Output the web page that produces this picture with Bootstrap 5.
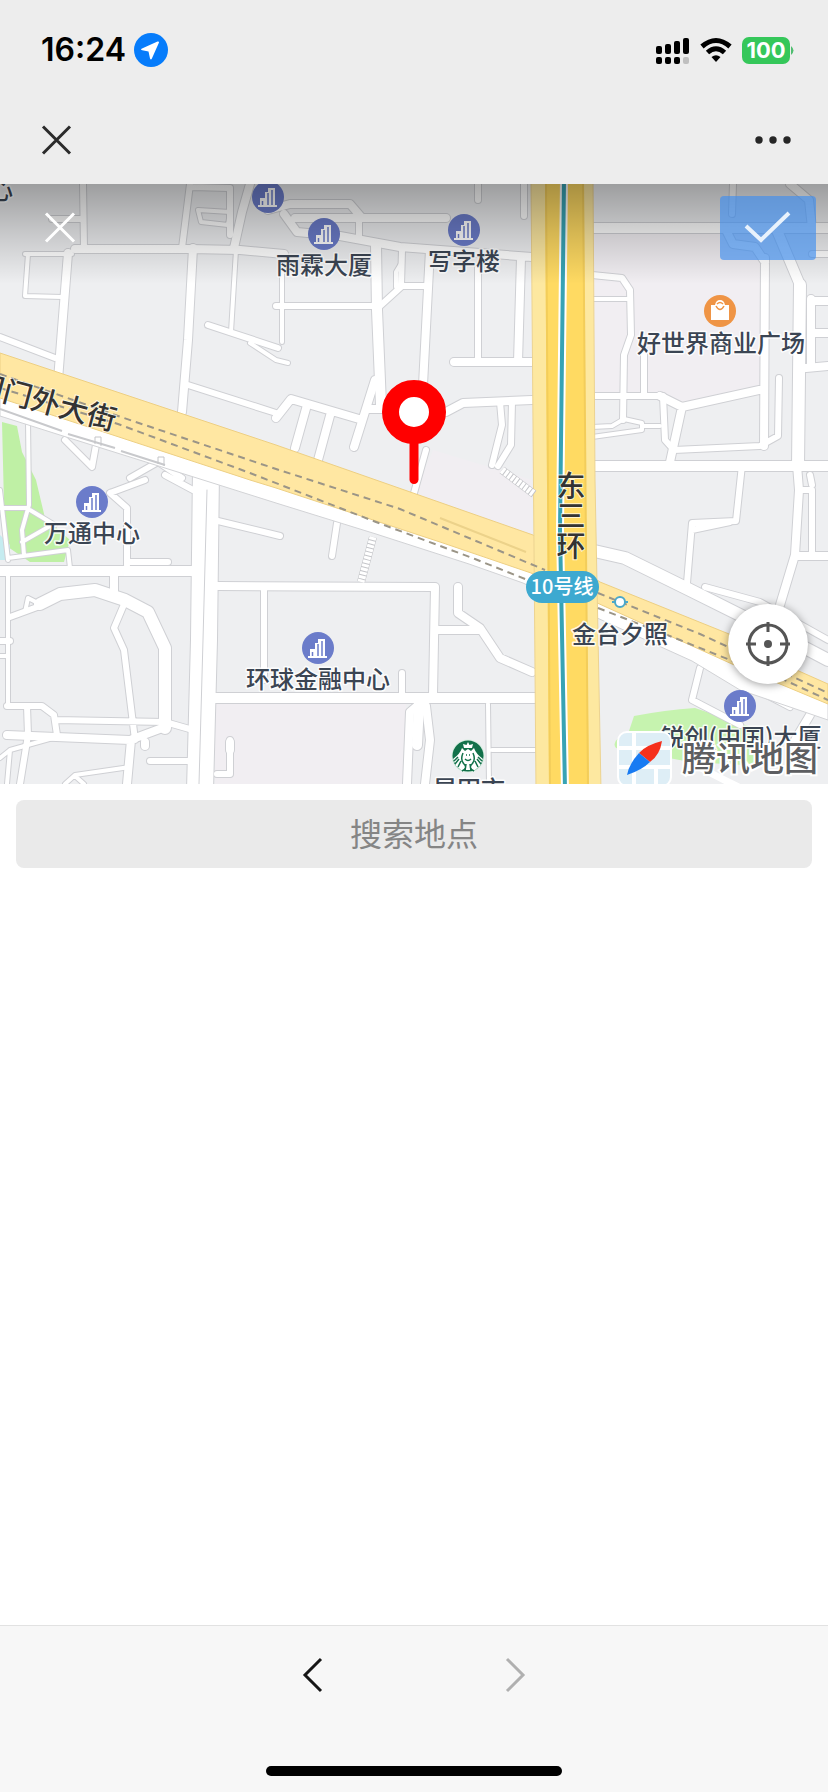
<!DOCTYPE html>
<html lang="zh-CN">
<head>
<meta charset="utf-8">
<meta name="viewport" content="width=device-width, initial-scale=1">
<title>选择地点</title>
<link href="https://cdn.jsdelivr.net/npm/bootstrap@5.3.0/dist/css/bootstrap.min.css" rel="stylesheet">
<style>
body{font-family:Inter,"Noto Sans CJK SC",sans-serif;background:#fff}
.chrome{background:#ededed}
.status-row{height:100px;padding:0 34px 0 41px}
.title-row{height:84px;padding:0 33px 4px 34px}
.clock{font-size:32px;line-height:40px;font-weight:600;color:#000}
.battery{width:48px;height:27px;border-radius:7px;background:#35c75a;color:#fff;font-size:22px;line-height:27px;font-weight:700}
.bare{background:none;border:0;padding:0;line-height:0}
.map-area{height:600px;background:#eeeff1}
.map-area>svg.tiles{width:100%;height:100%}
.map-shade{height:100px;background:linear-gradient(rgba(0,0,0,.34),rgba(0,0,0,.16) 50%,rgba(0,0,0,0));pointer-events:none}
.map-close{top:24px;left:40px}
.map-ok{top:12px;right:12px;width:96px;height:64px;border-radius:4px;background:rgba(62,141,240,.65)}
.map-locate{right:20px;bottom:100px;width:80px;height:80px;border-radius:50%;background:#fff;box-shadow:0 1px 8px rgba(0,0,0,.4)}
.map-pin{left:50%;bottom:50%;transform:translateX(-50%)}
.place-search{height:68px;border:0;border-radius:8px;background:#eaeaea;font-family:"Noto Sans CJK SC",sans-serif;font-size:32px;font-weight:400;color:#333;padding:4px 12px 8px}
.place-search::placeholder{color:#858585;opacity:1}
.place-search:focus{background:#eaeaea}
.tab-foot{background:#f7f7f7;border-top:1px solid #e2e2e2;padding:24px 0 16px}
.step-gap{gap:154px}
.home-bar{width:296px;height:10px;border-radius:5px;background:#000;margin-top:66px}
.poi{font:500 24px "Noto Sans CJK SC",sans-serif;fill:#3b4553;stroke:#fff;stroke-width:3px;stroke-opacity:.85;paint-order:stroke;text-anchor:middle;stroke-linejoin:round}
.street{font:500 29px "Noto Sans CJK SC",sans-serif;fill:#333;stroke:#fff;stroke-opacity:.7;stroke-width:2px;paint-order:stroke;text-anchor:middle}
.metro{font:500 20px "Noto Sans CJK SC",sans-serif;fill:#fff;text-anchor:middle}
.brand{font:500 34px "Noto Sans CJK SC",sans-serif;fill:#5d5e61;stroke:#fff;stroke-width:4px;paint-order:stroke;text-anchor:middle}
</style>
</head>
<body>
<div class="d-flex flex-column min-vh-100">
<header class="chrome">
  <div class="status-row d-flex align-items-center justify-content-between">
    <div class="d-flex align-items-center gap-2">
      <span class="clock">16:24</span>
      <svg width="34" height="34" viewBox="0 0 34 34" aria-hidden="true"><circle cx="17" cy="17" r="17" fill="#067cfb"/><path d="M23.500 8.500 8 15.500q-2 1.200.3 1.700l6.200 1.300 1.500 7q.9 1.800 1.900 0L25 9.500q.2-1.300-1.500-1z" fill="#fff"/></svg>
    </div>
    <div class="d-flex align-items-center">
      <svg width="34" height="27" viewBox="0 0 34 27" aria-hidden="true"><g fill="#000"><rect x="0" y="9" width="6" height="8" rx="2"/><rect x="9" y="7" width="6" height="10" rx="2"/><rect x="18" y="4" width="6" height="13" rx="2"/><rect x="27" y="1" width="6" height="16" rx="2"/><rect x="0" y="20" width="6" height="7" rx="2"/><rect x="9" y="20" width="6" height="7" rx="2"/><rect x="18" y="20" width="6" height="7" rx="2"/></g><rect x="27" y="20" width="6" height="7" rx="2" fill="#bfbfbf"/></svg>
      <svg class="mx-2" width="36" height="26" viewBox="0 0 36 26" aria-hidden="true"><g fill="none" stroke="#000" stroke-width="5"><path d="M4 9.500Q18-2.500 32 9.500"/><path d="M9.500 15.500Q18 8 26.500 15.500"/></g><path d="M13.500 20q4.500-3.500 9 0L18 25z"/></svg>
      <span class="battery text-center">100</span>
      <svg width="4" height="9" viewBox="0 0 4 9" aria-hidden="true"><path d="M1 0q5 4.500 0 9z" fill="#4fbd70"/></svg>
    </div>
  </div>
  <div class="title-row d-flex align-items-center justify-content-between">
    <button class="bare" type="button" aria-label="关闭页面"><svg width="44" height="44" viewBox="0 0 44 44"><path d="M9 8.500 36 35.500M36 8.500 9 35.500" stroke="#2b2b2b" stroke-width="3" stroke-linecap="butt"/></svg></button>
    <button class="bare" type="button" aria-label="更多"><svg width="44" height="44" viewBox="0 0 44 44"><g fill="#262626"><circle cx="8" cy="22" r="3.700"/><circle cx="22" cy="22" r="3.700"/><circle cx="36" cy="22" r="3.700"/></g></svg></button>
  </div>
</header>

<main class="flex-grow-1">
<section class="map-area position-relative overflow-hidden" aria-label="地图">
<svg class="tiles d-block" viewBox="0 184 828 600" preserveAspectRatio="xMidYMid slice">
<defs>
  <g id="r4"><path d="M25 254H72M28 254 25 296 62 297M236 250 231 332M250 343 276 360 288 363M198 210 230 212 228 225 201 222ZM282 252V342M592 299H631M592 427 612 426 624 419 642 423V430L592 437M642 426H660M8 571V705M28 420 29 505 22 530 24 555M0 508H28M0 490 8 560M30 510 55 525M22 542 50 526M8 558 68 550 70 568M488 704 489 784M492 750H535M0 758 10 750 60 736M10 750 7 784M65 784 75 775 130 767M75 776 84 784M25 612 28 598 40 604M0 656H8M396 287V272L402 262"/></g>
  <g id="r6"><path d="M83 184 84 248M52 219H80M190 184 182 248M192 187 230 188V235M208 325 278 348M188 385 276 413M276 306H375M359 218V240M402 250 401 285M427 286H402L380 306M478 268V362M478 184V200M524 184V216M500 402 502 425 492 465M512 402 511 445 498 466M426 450 414 493M592 275 622 278 630 290 631 335 624 355 623 420M592 396H660M644 350V394M663 396 665 440 674 450 760 446 778 436 779 378M733 184 732 214M812 254H828M705 587 760 602 828 640M700 668 692 700 740 725M715 668 790 707M800 490H812V555M10 617 40 606M0 641H10M125 602 114 628 124 650 135 740M7 706H42L54 715 57 735M55 720 165 722 193 730M150 761H190M27 706 28 735 20 784M110 493 145 480M110 493 127 508V565M127 562H168M165 475 193 490M65 440 92 467 96 445M130 478 158 462 182 478M218 521 280 536M264 590V680M337 523 332 556M402 673V695M217 774H230V740M742 465 736 521 692 523 687 583M692 530 730 522M812 485 810 475M0 337 55 358"/></g>
  <g id="r8"><path d="M75 249H190L240 250 284 254M68 253 58 380M193 248 188 340 182 412M250 184 242 212 234 248M268 210 290 204H350L362 218H446M284 214 297 232 340 236 400 247 532 257M295 218H360M430 250 423 385M521 258 518 362M454 362H532M276 418 291 399 359 419M307 405 295 448M331 412 318 460M375 380 354 447M366 409H382M446 412 463 403 532 400M660 396 682 407 764 389M682 407 670 462M765 258 764 446M727 232 733 244 755 247 765 262M790 184 809 200 812 228M811 299V366M811 301H828M811 333H828M806 368 828 366M797 465 799 490 795 555 780 605M795 556H828M7 735 130 740 165 727M131 740 127 784M145 742V746M114 571V592M218 586 435 587 433 695M458 587V613L480 628 500 658 532 672M437 630H480M407 784 410 712 417 706 426 706 430 740 425 784M230 742V750M795 740 810 715"/></g>
  <g id="r10"><path d="M376 245 377 310 381 405M592 228H828M592 466H828M0 571H193M215 698H537M419 704 417 745M776 228 800 285"/></g>
  <g id="r12"><path d="M590 550 625 558 690 590 740 615 790 640 828 660M40 604 60 594 95 590 125 600 148 612 165 648V728M800 285 798 466"/></g>
  <g id="bldg"><circle r="16" fill="#6b7cca"/><path d="M-10 10V8H-8V1H-3V-5H0V-9H7V8H9V10Z" fill="#fff"/><path d="M-5.500 4V8M0-4V8M4-7V8" stroke="#6b7cca" stroke-width="1.500" fill="none"/></g>
</defs>
<rect x="-100" y="100" width="1028" height="800" fill="#eeeff1"/>
<path d="M592 234H764V395L680 402 660 396H592ZM276 704H406V784H215V704ZM433 450 532 480V535L415 493Z" fill="#f1eef2"/>
<path d="M2 422 17 426 22 452 36 480 45 518 70 540 64 562H30L5 545Z" fill="#bff0a5"/>
<path d="M0 535 10 545V560H0Z" fill="#c5ecf0"/>
<path d="M634 716Q665 710 695 708L760 730 762 766 690 762 616 748Q610 740 628 734Z" fill="#c6f3af"/>
<g fill="none" stroke-linejoin="round" stroke-linecap="round">
  <g stroke="#cfd0d4"><use href="#r4" stroke-width="6"/><use href="#r6" stroke-width="8"/><use href="#r8" stroke-width="10"/><use href="#r10" stroke-width="12"/><use href="#r12" stroke-width="14"/>
  <path d="M206 470 204 640 200 790" stroke-width="28"/></g>
  <g stroke="#fff"><use href="#r4" stroke-width="4"/><use href="#r6" stroke-width="6"/><use href="#r8" stroke-width="8"/><use href="#r10" stroke-width="10"/><use href="#r12" stroke-width="12"/>
  <path d="M206 470 204 640 200 790" stroke-width="26"/></g>
  <path d="M207 490 203 640 199 784" stroke="#cfd0d4"/>
</g>
<!-- service road and avenue -->
<path d="M0 390 250 470 531 565 595 598 732 655 828 698V720L740 690 692 661 595 617 523 583 469 564 376 534 276 503 200 479 63 436 0 416Z" fill="#fff" stroke="#d2d3d6"/>
<path d="M0 409 62 431M68 434 115 448M121 451 165 465" stroke="#c8c9cc" stroke-width="2"/>
<path d="M95 444V437H101V446M158 464V457H164V466" stroke="#c4c5c8" fill="none"/>
<path d="M0 353 276 445 533 535 600 582 729 634 792 668 828 684V704L732 664 595 602 531 573 443 543 276 488 250 480 0 398Z" fill="#ffe7a2" stroke="#edcf83"/>
<path d="M440 518 526 552" stroke="#ecd28a" stroke-width="2"/>
<!-- ring road -->
<path d="M531 180H593L595 480 601 790H536Z" fill="#fde8a0" stroke="#ecd391"/>
<path d="M545 180H584L585 480 589 790H549Z" fill="#ffda62"/>
<path d="M546 180 550 790M583 180 588 790" stroke="#f3cd5a" stroke-width="2"/>
<path d="M564 180 560 530 565 790" fill="none" stroke="#fff" stroke-width="8"/>
<path d="M564 180 560 530 565 790" fill="none" stroke="#37a3b4" stroke-width="4"/>
<g fill="none" stroke="#9b9587" stroke-width="2" stroke-dasharray="7 5">
  <path d="M0 374 118 416 276 469 400 509 545 570M0 388 118 424 250 473 376 522 475 559 530 581M598 593 700 634 828 693M598 608 680 640 740 664M780 678 828 700"/>
</g>
<path d="M373 537 361 582M502 470 534 494" fill="none" stroke="#c4c5c9" stroke-width="8"/>
<path d="M373 537 361 582M502 470 534 494" fill="none" stroke="#fff" stroke-width="7" stroke-dasharray="3 1"/>
<path d="M612 602H628" stroke="#4aa8ca" stroke-width="2"/><circle cx="620" cy="602" r="5" fill="#fff" stroke="#4aa8ca" stroke-width="2"/>
<path d="M690 762Q715 776 745 790" fill="none" stroke="#fff" stroke-width="7"/>

<use href="#bldg" x="268" y="197"/><use href="#bldg" x="324" y="234"/><use href="#bldg" x="464" y="230"/><use href="#bldg" x="92" y="502"/><use href="#bldg" x="318" y="648"/><use href="#bldg" x="740" y="706"/>
<g transform="translate(720 311)"><circle r="16" fill="#ef9445"/><path d="M-9-6H-5Q-4-11 0-11T5-6H9V9H-9Z" fill="#fff"/><path d="M-4-5Q0 2 4-5M-3-7Q0-10 3-7" fill="none" stroke="#ef9445" stroke-width="1.500"/></g>
<g transform="translate(468 756)"><circle r="16.500" fill="#d8efe2"/><circle r="15.500" fill="#12714a"/><path d="M-15 3Q-8-2-6-8L-3-5 0-7 3-5 6-8Q8-2 15 3L12 10 7 14H-7L-12 10Z" fill="#fff"/><path d="M0-14 1.500-11 5-12 4-8H-4L-5-12-1.500-11Z" fill="#fff"/><path d="M-14 5-10 1M-13 8-9 3M-10 11-7 5M14 5 10 1M13 8 9 3M10 11 7 5M-5-3Q-8 4-4 8T-6 15M5-3Q8 4 4 8T6 15M-3 3Q0 6 3 3M-2-1H-1M1-1H2M-2 8-3 15M2 8 3 15" fill="none" stroke="#12714a" stroke-width="1.500"/></g>

<text class="poi" x="1" y="199">心</text>
<text class="poi" x="324" y="274">雨霖大厦</text>
<text class="poi" x="464" y="270">写字楼</text>
<text class="poi" x="721" y="352">好世界商业广场</text>
<text class="poi" x="92" y="542">万通中心</text>
<text class="poi" x="318" y="688">环球金融中心</text>
<text class="poi" x="620" y="643">金台夕照</text>
<text class="poi" x="741" y="746">锐创(中国)大厦</text>
<text class="poi" x="469" y="798">昆田市</text>
<text class="street" transform="translate(43 412) rotate(15)">国门外大街</text>
<text class="street"><tspan x="571" y="497">东</tspan><tspan x="571" y="527">三</tspan><tspan x="571" y="557">环</tspan></text>
<rect x="526" y="571" width="73" height="32" rx="16" fill="#3da9d0"/>
<text class="metro" x="562" y="594">10号线</text>
<g>
  <rect x="618" y="732" width="53" height="54" rx="9" fill="#deeef6" stroke="#fff" stroke-width="2"/>
  <path d="M634 733V784M619 748H670M656 765V784M619 767H670" stroke="#fff" stroke-width="4"/>
  <path d="M662 741Q646 745 639 753L650 762Q660 755 662 741Z" fill="#f5301c"/><path d="M639 753 650 762Q642 770 627 775Q629 764 639 753Z" fill="#187bf2"/>
</g>
<text class="brand" x="750" y="771">腾讯地图</text>
</svg>
<div class="map-shade position-absolute top-0 start-0 end-0"></div>
<button class="bare map-close position-absolute" type="button" aria-label="取消"><svg width="40" height="40" viewBox="0 0 40 40"><path d="M6 5.500 34 33.500M34 5.500 6 33.500" stroke="#fff" stroke-width="3"/></svg></button>
<button class="bare map-ok position-absolute" type="button" aria-label="确定"><svg width="96" height="64" viewBox="0 0 96 64"><path d="M26 30 41 44 69 17" fill="none" stroke="#e9f2fc" stroke-width="4"/></svg></button>
<svg class="map-pin position-absolute" width="64" height="104" viewBox="0 0 64 104" aria-label="已选位置"><path d="M32 60V99.500" stroke="#f00" stroke-width="9" stroke-linecap="round"/><circle cx="32" cy="32" r="23.500" fill="#fff" stroke="#f00" stroke-width="17"/></svg>
<button class="bare map-locate position-absolute" type="button" aria-label="定位"><svg width="48" height="48" viewBox="0 0 48 48"><g fill="none" stroke="#555" stroke-width="3"><circle cx="24" cy="24" r="19"/><path d="M24 2V12M24 36V46M2 24H12M36 24H46"/></g><circle cx="24" cy="24" r="4" fill="#555"/></svg></button>
</section>
<form class="p-3" role="search">
  <label class="visually-hidden" for="place">搜索地点</label>
  <input id="place" class="form-control place-search text-center" type="text" placeholder="搜索地点">
</form>
</main>

<footer class="tab-foot">
  <nav class="d-flex justify-content-center step-gap" aria-label="历史">
    <button class="bare" type="button" aria-label="后退"><svg width="48" height="50" viewBox="0 0 48 50"><path d="M32 9 16 25 32 41" fill="none" stroke="#161616" stroke-width="3"/></svg></button>
    <button class="bare" type="button" aria-label="前进" disabled><svg width="48" height="50" viewBox="0 0 48 50"><path d="M16 9 32 25 16 41" fill="none" stroke="#b0b0b0" stroke-width="3"/></svg></button>
  </nav>
  <div class="home-bar mx-auto"></div>
</footer>
</div>
<script src="https://cdn.jsdelivr.net/npm/bootstrap@5.3.0/dist/js/bootstrap.bundle.min.js"></script>
</body>
</html>
